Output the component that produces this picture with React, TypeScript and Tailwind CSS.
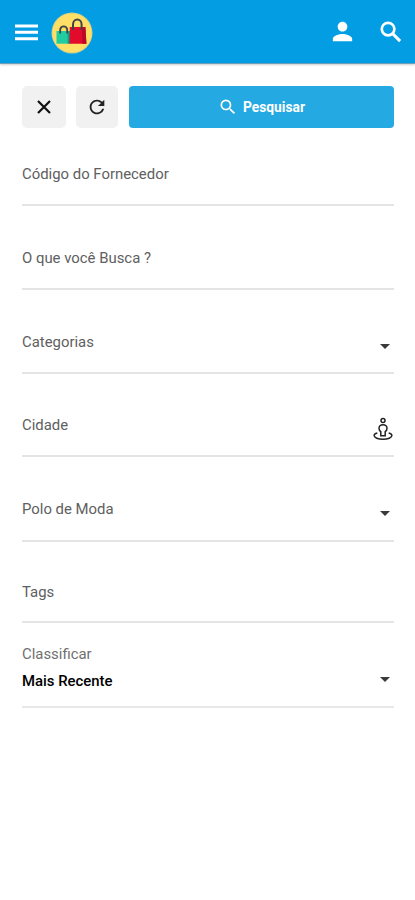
import { type ReactNode } from "react"
import { MdPerson, MdRefresh, MdSearch } from "react-icons/md"

function ShoppingLogo() {
  return (
    <svg width="42" height="42" viewBox="0 0 42 42" role="img" aria-label="Shopping">
      <circle cx="21" cy="21" r="20.5" fill="#cfcf8a" />
      <circle cx="21" cy="21" r="19.6" fill="#ffdf66" />
      <path d="M5.5 19h12.8v12.7H5.5z" fill="#20cda0" />
      <path d="M16.6 19h2.6v12.7h-2.6z" fill="#119f88" />
      <path d="M18.8 15h15.6l1 16.7H18.4z" fill="#e30b2b" />
      <path d="M31 15h3.4l1 16.7h-4z" fill="#b80a27" />
      <path d="M9.2 21.5v-4a3.6 4 0 0 1 7 0v4" fill="none" stroke="#41434a" strokeWidth="1.8" />
      <path d="M22 18v-5.5a4.3 5 0 0 1 8.6 0V18" fill="none" stroke="#41434a" strokeWidth="2" />
    </svg>
  )
}

function MenuIcon() {
  return (
    <svg width="23" height="17" viewBox="0 0 23 17" fill="#fff">
      <path d="M0 .4h23v3H0zM0 6.8h23v3H0zM0 13.2h23v3H0z" />
    </svg>
  )
}

function ClearIcon() {
  return (
    <svg width="14" height="14" viewBox="0 0 14 14" fill="none" stroke="#111" strokeWidth="2.2">
      <path d="M1 1l12 12M13 1L1 13" />
    </svg>
  )
}

function LocateIcon() {
  return (
    <svg width="20" height="24" viewBox="0 0 20 24" fill="none" stroke="#222" strokeWidth="1.5">
      <circle cx="10" cy="3.6" r="2" />
      <path d="M10 7.8c-2.6 0-4 1.3-4 3.4 0 1.6.7 2.7 1.8 3.4v4.1h4.4v-4.1c1.1-.7 1.8-1.8 1.8-3.4 0-2.1-1.4-3.4-4-3.4z" />
      <path d="M4.3 16C2.3 16.5 1.1 17.4 1.1 18.6c0 2.1 4 3.7 8.9 3.7s8.9-1.6 8.9-3.7c0-1.2-1.2-2.1-3.2-2.6" />
    </svg>
  )
}

function Caret() {
  return (
    <svg width="10" height="5" viewBox="0 0 10 5" className="mr-[4px]">
      <path d="M0 0h10L5 5z" fill="#3a3a3a" />
    </svg>
  )
}

interface FieldProps {
  label: string
  className: string
  icon?: ReactNode
}

function Field({ label, className, icon }: FieldProps) {
  return (
    <div className={`flex justify-between border-b-2 border-[#e4e4e4] ${className}`}>
      <span className="text-[14.9px] leading-[20px] text-[#606060]">{label}</span>
      {icon}
    </div>
  )
}

export default function App() {
  return (
    <div className="min-h-[900px] w-full bg-white font-[Roboto,sans-serif]">
      <header className="flex h-[64px] items-center border-b border-[#6f9fb8] bg-[#039de3] pr-[10px] pl-[14.5px] shadow-[0_1px_2px_rgba(0,0,0,0.2)]">
        <button type="button" aria-label="Menu" className="mt-[2px]">
          <MenuIcon />
        </button>
        <div className="mt-[2px] ml-[13.5px]">
          <ShoppingLogo />
        </div>
        <button type="button" aria-label="Conta" className="ml-auto">
          <MdPerson size={29} color="#fff" />
        </button>
        <button type="button" aria-label="Buscar" className="ml-[20px]">
          <svg width="28" height="28" viewBox="0 0 24 24" fill="none" stroke="#fff" strokeWidth="2.3">
            <circle cx="9.5" cy="9.5" r="5.4" />
            <path d="M13.6 13.6l6.2 6.2" strokeWidth="2.6" />
          </svg>
        </button>
      </header>

      <main className="pt-[22px] pr-[21px] pl-[22px]">
        <div className="flex h-[42px]">
          <button
            type="button"
            aria-label="Limpar"
            className="flex w-[44px] items-center justify-center rounded-[5px] bg-[#f1f1f1]"
          >
            <ClearIcon />
          </button>
          <button
            type="button"
            aria-label="Atualizar"
            className="ml-[10px] flex w-[42px] items-center justify-center rounded-[5px] bg-[#f1f1f1]"
          >
            <MdRefresh size={22} color="#222" />
          </button>
          <button
            type="button"
            className="ml-[11px] flex flex-1 items-center justify-center gap-[5px] rounded-[4px] bg-[#25a9e2] text-[13.8px] font-bold text-white"
          >
            <MdSearch size={20} />
            Pesquisar
          </button>
        </div>

        <form>
          <Field label="Código do Fornecedor" className="h-[78px] pt-[36px]" />
          <Field label="O que você Busca ?" className="h-[84px] pt-[42px]" />
          <Field label="Categorias" className="h-[84px] pt-[42px]" icon={<div className="pt-[12px]"><Caret /></div>} />
          <Field label="Cidade" className="h-[83px] pt-[41px]" icon={<div className="pt-[2px] pr-[1px]"><LocateIcon /></div>} />
          <Field label="Polo de Moda" className="h-[85px] pt-[42px]" icon={<div className="pt-[12px]"><Caret /></div>} />
          <Field label="Tags" className="h-[81px] pt-[40px]" />
          <div className="flex h-[85px] justify-between border-b-2 border-[#e8e8e8] pt-[21px]">
            <div className="flex flex-col gap-[7px] text-[14.9px] leading-[20px]">
              <span className="text-[#707070]">Classificar</span>
              <span className="font-medium text-black">Mais Recente</span>
            </div>
            <div className="pt-[33px]">
              <Caret />
            </div>
          </div>
        </form>
      </main>
    </div>
  )
}
